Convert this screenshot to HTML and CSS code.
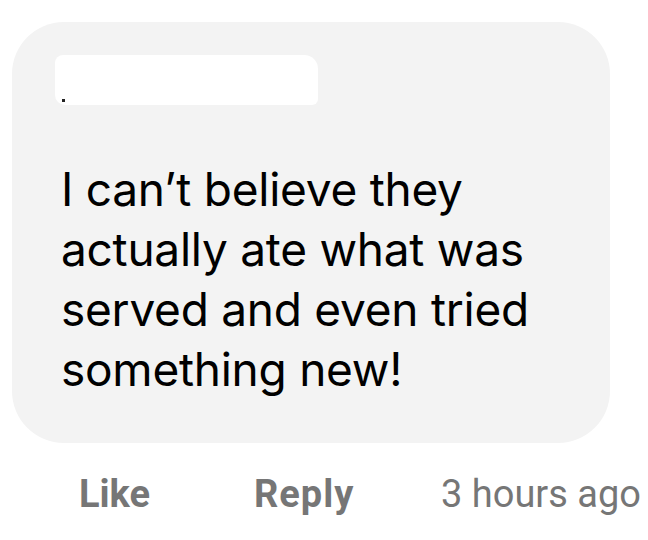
FILE: index.html
```html
<!DOCTYPE html>
<html lang="en">
<head>
    <meta charset="UTF-8">
    <meta name="viewport" content="width=device-width, initial-scale=1.0">
    <title>Comment</title>
    <link rel="stylesheet" href="styles.css">
</head>
<body>
    <div class="comment">
        <div class="author">
            <span class="name-mask"></span>
            <span class="dot"></span>
        </div>
        <p class="text">I can’t believe they actually ate what was served and even tried something new!</p>
    </div>

    <div class="actions">
        <span class="like">Like</span>
        <span class="reply">Reply</span>
        <span class="time">3 hours ago</span>
    </div>
</body>
</html>
```

FILE: styles.css
```css
body {
    font-family: Inter, "Noto Sans", sans-serif;
    margin: 0;
    padding: 0;
    background-color: #fff;
    color: #000;
}
.comment {
    margin: 22px 0 0 12px;
    width: 598px;
    height: 421px;
    box-sizing: border-box;
    padding: 33px 40px 0 49px;
    background-color: #f3f3f3;
    border-radius: 52px;
}
.author {
    position: relative;
    height: 50px;
}
.name-mask {
    display: block;
    margin-left: -6px;
    width: 263px;
    height: 50px;
    background-color: #fff;
    border-radius: 8px 14px 6px 10px;
}
.dot {
    position: absolute;
    left: 1px;
    top: 44px;
    width: 3px;
    height: 3px;
    background-color: #222;
}
.text {
    margin: 54px 0 0 0;
    font-size: 46px;
    line-height: 60px;
    letter-spacing: -0.25px;
}
.actions {
    display: flex;
    margin-top: 29px;
    padding-left: 79px;
    font-family: Roboto, "Liberation Sans", sans-serif;
    font-size: 38px;
    line-height: 44px;
    color: #767676;
}
.like, .reply {
    font-weight: bold;
}
.like {
    width: 175px;
}
.reply {
    width: 187px;
    letter-spacing: 1px;
}
```
